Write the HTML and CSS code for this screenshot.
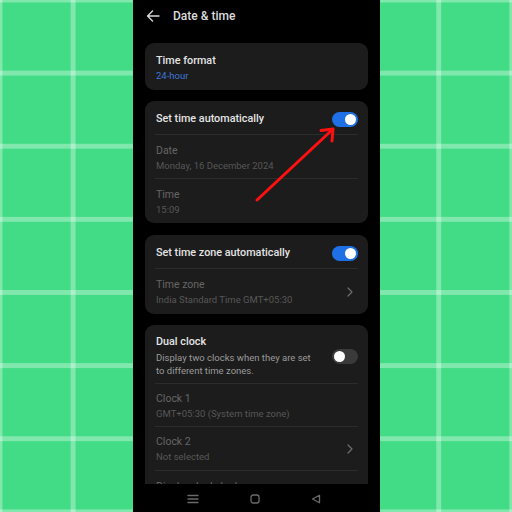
FILE: index.html
```html
<!DOCTYPE html>
<html>
<head>
<meta charset="utf-8">
<link rel="stylesheet" href="styles.css">
</head>
<body>
<div class="stage">
  <div class="phone">
    <div class="header">
      <svg class="back" width="14" height="12" viewBox="0 0 14 12"><path d="M13 6H1.5M6.5 1L1.5 6l5 5" fill="none" stroke="#d8d8d8" stroke-width="1.4" stroke-linecap="round" stroke-linejoin="round"/></svg>
      <span class="title">Date &amp; time</span>
    </div>
    <div class="content">
      <div class="card">
        <div class="simple">
          <div class="t">Time format</div>
          <div class="v blue">24-hour</div>
        </div>
      </div>
      <div class="card">
        <div class="switch-row">
          <div class="t">Set time automatically</div>
          <div class="toggle on"><span class="knob"></span></div>
        </div>
        <div class="item">
          <div class="lbl">Date</div>
          <div class="val">Monday, 16 December 2024</div>
        </div>
        <div class="item last">
          <div class="lbl">Time</div>
          <div class="val">15:09</div>
        </div>
      </div>
      <div class="card card-tz">
        <div class="switch-row">
          <div class="t">Set time zone automatically</div>
          <div class="toggle on"><span class="knob"></span></div>
        </div>
        <div class="item last with-chev tz">
          <div class="txt">
            <div class="lbl">Time zone</div>
            <div class="val">India Standard Time GMT+05:30</div>
          </div>
          <svg class="chev" width="6" height="10" viewBox="0 0 6 10"><path d="M1 1l4 4-4 4" fill="none" stroke="#6e6e6e" stroke-width="1.2" stroke-linecap="round" stroke-linejoin="round"/></svg>
        </div>
      </div>
      <div class="card card-last">
        <div class="dual-row">
          <div class="txt">
            <div class="t">Dual clock</div>
            <div class="desc">Display two clocks when they are set<br>to different time zones.</div>
          </div>
          <div class="toggle off"><span class="knob"></span></div>
        </div>
        <div class="item c1">
          <div class="lbl">Clock 1</div>
          <div class="val">GMT+05:30 (System time zone)</div>
        </div>
        <div class="item with-chev">
          <div class="txt">
            <div class="lbl">Clock 2</div>
            <div class="val">Not selected</div>
          </div>
          <svg class="chev" width="6" height="10" viewBox="0 0 6 10"><path d="M1 1l4 4-4 4" fill="none" stroke="#6e6e6e" stroke-width="1.2" stroke-linecap="round" stroke-linejoin="round"/></svg>
        </div>
        <div class="item last">
          <div class="lbl">Display dual clock on</div>
        </div>
      </div>
    </div>
    <div class="navbar">
      <svg width="12" height="10" viewBox="0 0 12 10"><path d="M1 1.5h10M1 5h10M1 8.5h10" stroke="#6a6a6a" stroke-width="1.3" stroke-linecap="round"/></svg>
      <svg width="10" height="10" viewBox="0 0 10 10"><rect x="1" y="1" width="8" height="8" rx="2.2" fill="none" stroke="#6a6a6a" stroke-width="1.3"/></svg>
      <svg width="10" height="10" viewBox="0 0 10 10"><path d="M8.5 1.2v7.6L1.5 5z" fill="none" stroke="#6a6a6a" stroke-width="1.3" stroke-linejoin="round"/></svg>
    </div>
    <svg class="arrow" width="247" height="512" viewBox="0 0 247 512">
      <path d="M124 200L199 130" stroke="#ff1010" stroke-width="3" stroke-linecap="round" fill="none"/>
      <path d="M188 130.5L200 129L199 141" stroke="#ff1010" stroke-width="3" stroke-linecap="round" stroke-linejoin="round" fill="none"/>
    </svg>
  </div>
</div>
</body>
</html>
```
FILE: styles.css
```css
* { box-sizing: border-box; }
html, body { margin: 0; padding: 0; }
body {
  width: 512px;
  height: 512px;
  overflow: hidden;
  font-family: Roboto, "Noto Sans", sans-serif;
  background-color: #41dc85;
  background-image:
    linear-gradient(to right, rgba(255,255,255,0.33) 5px, transparent 5px),
    linear-gradient(to bottom, rgba(255,255,255,0.33) 5px, transparent 5px);
  background-size: 73.14px 100%, 100% 73.14px;
  background-position: -2.5px 0, 0 -2.5px;
}
.stage {
  display: flex;
  height: 512px;
  padding-left: 133px;
}
.phone {
  position: relative;
  width: 247px;
  height: 512px;
  background: #000;
  display: flex;
  flex-direction: column;
  overflow: hidden;
}
.header {
  height: 31px;
  display: flex;
  align-items: center;
  padding-left: 13px;
}
.back { display: block; }
.title {
  margin-left: 13px;
  color: #dcdcdc;
  font-size: 12px;
  font-weight: 500;
}
.content {
  flex: 1;
  padding: 12px 12px 0;
  display: flex;
  flex-direction: column;
  gap: 11px;
  overflow: hidden;
}
.card {
  background: #1c1c1c;
  border-radius: 9px;
  flex-shrink: 0;
}
.card-tz { margin-top: 1px; }
.card-last { border-radius: 9px 9px 0 0; }
.simple { padding: 11px 11px 6px; }
.t {
  color: #e4e4e4;
  font-size: 10.8px;
  line-height: 14px;
  font-weight: 500;
}
.v { font-size: 9.5px; line-height: 16px; }
.blue { color: #3c78d8; }
.switch-row {
  height: 34px;
  margin: 0 10px;
  padding: 2px 0 0 1px;
  display: flex;
  align-items: center;
  justify-content: space-between;
  border-bottom: 1px solid #2c2c2c;
}
.switch-row .toggle { margin-top: 1px; }
.toggle {
  width: 26px;
  height: 15px;
  border-radius: 8px;
  position: relative;
  flex-shrink: 0;
}
.toggle.on { background: #1f6fe5; }
.toggle.off { background: #3a3a3a; }
.knob {
  position: absolute;
  top: 2px;
  width: 11px;
  height: 11px;
  border-radius: 50%;
  background: #fff;
}
.on .knob { right: 2px; }
.off .knob { left: 2px; }
.item {
  margin: 0 10px;
  padding: 9px 0 5px 1px;
  height: 44px;
  border-bottom: 1px solid #2c2c2c;
}
.item.last { border-bottom: none; }
.item.c1 { height: 43px; padding-top: 8px; }
.item.tz { height: 45px; }
.with-chev {
  display: flex;
  align-items: center;
  justify-content: space-between;
  padding-top: 0;
  padding-bottom: 0;
}
.with-chev .txt { padding-top: 3px; }
.chev { margin-right: 5px; display: block; }
.lbl {
  color: #666;
  font-size: 10.5px;
  line-height: 14px;
}
.val {
  color: #575757;
  font-size: 9.5px;
  line-height: 16px;
}
.dual-row {
  margin: 0 10px;
  padding: 10px 0 6px 1px;
  display: flex;
  align-items: center;
  justify-content: space-between;
  border-bottom: 1px solid #2c2c2c;
}
.dual-row .t { margin-bottom: 2px; }
.desc {
  color: #9a9a9a;
  font-size: 9.5px;
  line-height: 13px;
}
.navbar {
  height: 28px;
  flex-shrink: 0;
  background: #000;
  display: flex;
  align-items: center;
  justify-content: center;
  gap: 51px;
  padding: 2px 6px 0 0;
}
.navbar svg { display: block; }
.arrow {
  position: absolute;
  left: 0;
  top: 0;
  pointer-events: none;
}
```
